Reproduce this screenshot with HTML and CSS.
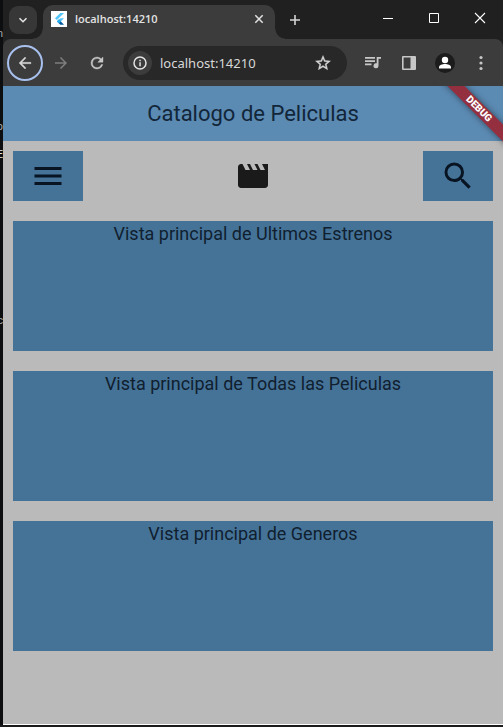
FILE: index.html
```html
<!DOCTYPE html>
<html lang="es">
<head>
<meta charset="utf-8">
<meta name="viewport" content="width=device-width, initial-scale=1">
<title>Catalogo de Peliculas</title>
<link rel="stylesheet" href="styles.css">
</head>
<body>
<div class="desktop">
  <div class="behind" aria-hidden="true">
    <span class="frag frag-n">n</span>
    <span class="frag frag-p">p</span>
    <span class="frag frag-e">E</span>
    <span class="frag frag-c">c</span>
  </div>
  <div class="window">
    <header class="tabstrip">
      <button class="tab-search" aria-label="Buscar pestañas">
        <svg width="10" height="10" viewBox="0 0 10 10"><path d="M1.500 3.200 5 6.700 8.500 3.200" fill="none" stroke="#e3e3e3" stroke-width="1.600"/></svg>
      </button>
      <div class="tab">
        <svg class="favicon" width="16" height="16" viewBox="0 0 16 16">
          <rect width="16" height="16" fill="#fff"/>
          <path d="M9.300 2h3.700L5.900 9.100 4 7.300z" fill="#54c5f8"/>
          <path d="M9.300 7.200H13L10.100 10.200 7.300 10.900 6 10.400z" fill="#54c5f8"/>
          <path d="M6 10.400 7.900 8.600 13 13.800H9.300z" fill="#01579b"/>
          <path d="M6 10.400 7.900 8.600 9.800 10.400 7.900 12.300z" fill="#29b6f6"/>
        </svg>
        <span class="tab-title">localhost:14210</span>
        <button class="tab-close" aria-label="Cerrar pestaña">
          <svg width="10" height="10" viewBox="0 0 10 10"><path d="M1.300 1.300 8.700 8.700M8.700 1.300 1.300 8.700" stroke="#e3e3e3" stroke-width="1.500"/></svg>
        </button>
      </div>
      <button class="new-tab" aria-label="Nueva pestaña">
        <svg width="12" height="12" viewBox="0 0 12 12"><path d="M6 1v10M1 6h10" stroke="#d4d4d4" stroke-width="1.600"/></svg>
      </button>
      <div class="win-controls">
        <button aria-label="Minimizar"><svg width="12" height="12" viewBox="0 0 12 12"><path d="M1 6.500h10" stroke="#fff"/></svg></button>
        <button aria-label="Maximizar"><svg width="12" height="12" viewBox="0 0 12 12"><path d="M1.500 1.500h9v9h-9z" fill="none" stroke="#fff"/></svg></button>
        <button aria-label="Cerrar"><svg width="12" height="12" viewBox="0 0 12 12"><path d="M1 1 11 11M11 1 1 11" stroke="#fff" stroke-width="1.100"/></svg></button>
      </div>
    </header>

    <nav class="toolbar">
      <button class="nav-btn back" aria-label="Atrás">
        <svg width="18" height="18" viewBox="0 0 24 24"><path d="M20 11H7.830l5.590-5.590L12 4l-8 8 8 8 1.410-1.410L7.830 13H20z" fill="#d6d6d6" stroke="#d6d6d6" stroke-width=".4"/></svg>
      </button>
      <button class="nav-btn" aria-label="Adelante">
        <svg width="18" height="18" viewBox="0 0 24 24"><path d="m12 4-1.410 1.410L16.170 11H4v2h12.170l-5.580 5.590L12 20l8-8z" fill="#7e7e7e"/></svg>
      </button>
      <button class="nav-btn" aria-label="Recargar">
        <svg width="18" height="18" viewBox="0 0 24 24"><path d="M17.650 6.350A7.960 7.960 0 0 0 12 4a8 8 0 1 0 7.730 10h-2.080A6 6 0 1 1 12 6c1.660 0 3.140.690 4.220 1.780L13 11h7V4z" fill="#c7c7c7" stroke="#c7c7c7" stroke-width=".5"/></svg>
      </button>
      <div class="omnibox">
        <button class="site-info" aria-label="Información del sitio">
          <svg width="16" height="16" viewBox="0 0 16 16"><circle cx="8" cy="8" r="6" fill="none" stroke="#e3e3e3" stroke-width="1.500"/><path d="M7.300 7.200h1.500v4H7.300zM7.300 4.700h1.500v1.500H7.300z" fill="#e3e3e3"/></svg>
        </button>
        <input class="url" type="text" value="localhost:14210" aria-label="Dirección">
        <button class="bookmark" aria-label="Añadir a marcadores">
          <svg width="18" height="18" viewBox="0 0 24 24"><path d="m22 9.240-7.190-.620L12 2 9.190 8.630 2 9.240l5.460 4.730L5.820 21 12 17.270 18.180 21l-1.630-7.030zM12 15.400l-3.760 2.270 1-4.280-3.320-2.880 4.380-.380L12 6.100l1.710 4.040 4.380.380-3.320 2.880 1 4.280z" fill="#d6d6d6" stroke="#d6d6d6" stroke-width=".5"/></svg>
        </button>
      </div>
      <div class="actions">
        <button aria-label="Controles multimedia">
          <svg width="18" height="18" viewBox="0 0 18 18"><path d="M1 3h10v1.700H1zM1 6.300h10V8H1zM1 9.600h6.500v1.700H1z" fill="#c7c7c7"/><path d="M12.700 3H17v1.800h-2.500v6.900a2.500 2.500 0 1 1-1.800-2.400z" fill="#c7c7c7"/></svg>
        </button>
        <button aria-label="Panel lateral">
          <svg width="16" height="16" viewBox="0 0 16 16"><path d="M2 1h12a1 1 0 0 1 1 1v12a1 1 0 0 1-1 1H2a1 1 0 0 1-1-1V2a1 1 0 0 1 1-1zm.600 1.600v10.800H9.500V2.600z" fill="#c7c7c7" fill-rule="evenodd"/></svg>
        </button>
        <button aria-label="Perfil">
          <svg width="20" height="20" viewBox="0 0 20 20"><circle cx="10" cy="10" r="10" fill="#1c1c1c"/><circle cx="10" cy="7" r="3.200" fill="#fff"/><path d="M4 15.500v-1.300c0-2.200 3.500-3.200 6-3.200s6 1 6 3.200v1.300z" fill="#fff"/></svg>
        </button>
        <button aria-label="Menú del navegador">
          <svg width="16" height="16" viewBox="0 0 16 16"><g fill="#c7c7c7"><circle cx="8" cy="2.500" r="1.600"/><circle cx="8" cy="8" r="1.600"/><circle cx="8" cy="13.500" r="1.600"/></g></svg>
        </button>
      </div>
    </nav>

    <div class="app">
      <div class="debug-corner"><span class="debug-band">DEBUG</span></div>
      <header class="appbar"><h1>Catalogo de Peliculas</h1></header>
      <main class="content">
        <div class="quick">
          <button class="tile" aria-label="Menú">
            <svg width="36" height="36" viewBox="0 0 24 24"><path d="M3 18h18v-2H3zm0-5h18v-2H3zm0-7v2h18V6z" fill="#081422"/></svg>
          </button>
          <svg width="36" height="36" viewBox="0 0 24 24"><path d="m18 4 2 4h-3l-2-4h-2l2 4h-3l-2-4H8l2 4H7L5 4H4c-1.100 0-1.990.900-1.990 2L2 18c0 1.100.900 2 2 2h16c1.100 0 2-.900 2-2V4z" fill="#1a1a1a"/></svg>
          <button class="tile" aria-label="Buscar">
            <svg width="36" height="36" viewBox="0 0 24 24"><path d="M15.500 14h-.790l-.280-.270A6.470 6.470 0 0 0 16 9.500 6.500 6.500 0 1 0 9.500 16c1.610 0 3.090-.590 4.230-1.570l.270.280v.790l5 4.990L20.490 19zm-6 0C7.010 14 5 11.990 5 9.500S7.010 5 9.500 5 14 7.010 14 9.500 11.990 14 9.500 14z" fill="#081422"/></svg>
          </button>
        </div>
        <section class="panel"><h2>Vista principal de Ultimos Estrenos</h2></section>
        <section class="panel"><h2>Vista principal de Todas las Peliculas</h2></section>
        <section class="panel"><h2>Vista principal de Generos</h2></section>
      </main>
    </div>
  </div>
</div>
</body>
</html>
```
FILE: styles.css
```css
* { box-sizing: border-box; }

body {
  margin: 0;
  background: #1b1b1b;
  font-family: Roboto, "Liberation Sans", sans-serif;
}

button {
  display: flex;
  align-items: center;
  justify-content: center;
  padding: 0;
  border: 0;
  background: none;
  flex: none;
}

svg { display: block; flex: none; }

.desktop {
  display: flex;
  min-height: 100vh;
  padding-bottom: 2px;
}

/* Sliver of the editor window that shows behind the browser */
.behind {
  position: relative;
  flex: none;
  width: 3px;
  overflow: hidden;
  background: #0d0e10;
}

.frag {
  position: absolute;
  right: 0;
  font-size: 11px;
  line-height: 12px;
  color: #a8a8a8;
}
.frag-n { top: 28px; }
.frag-p { top: 121px; }
.frag-e { top: 149px; color: #e8e8e8; }
.frag-c { top: 315px; }

.window {
  flex: 1;
  min-width: 0;
  display: flex;
  flex-direction: column;
  background: #202020;
}

.tabstrip {
  display: flex;
  align-items: center;
  height: 39px;
  padding-left: 6px;
}

.tab-search {
  width: 28px;
  height: 28px;
  border-radius: 9px;
  background: #373737;
}

.tab {
  position: relative;
  display: flex;
  align-items: center;
  align-self: flex-end;
  width: 232px;
  height: 34px;
  margin-left: 6px;
  padding: 0 8px 6px;
  border-radius: 10px 10px 0 0;
  background: #3c3c3c;
}

/* Concave feet of the active tab */
.tab::before,
.tab::after {
  content: "";
  position: absolute;
  bottom: 0;
  width: 10px;
  height: 10px;
}
.tab::before {
  right: 100%;
  background: radial-gradient(circle at 0 0, transparent 9px, #3c3c3c 10px);
}
.tab::after {
  left: 100%;
  background: radial-gradient(circle at 100% 0, transparent 9px, #3c3c3c 10px);
}

.tab-title {
  flex: 1;
  margin-left: 8px;
  font: 600 11px/16px "Open Sans", "Noto Sans", sans-serif;
  color: #e3e3e3;
}

.tab-close { width: 16px; height: 16px; }

.new-tab {
  width: 28px;
  height: 28px;
  margin-left: 6px;
}

.win-controls {
  display: flex;
  align-self: flex-start;
  margin-left: auto;
}
.win-controls button { width: 46px; height: 36px; }

.toolbar {
  display: flex;
  align-items: center;
  height: 47px;
  padding: 0 4px;
  border-radius: 8px 8px 0 0;
  background: #3c3c3c;
}

.nav-btn {
  width: 36px;
  height: 36px;
  border-radius: 50%;
}
.back { border: 2px solid #a8c0ee; }

.omnibox {
  display: flex;
  align-items: center;
  flex: 1;
  min-width: 0;
  height: 34px;
  margin-left: 8px;
  padding: 0 15px 0 5px;
  border-radius: 17px;
  background: #282828;
}

.site-info {
  width: 24px;
  height: 24px;
  border-radius: 50%;
  background: #3c3c3c;
}

.url {
  flex: 1;
  min-width: 0;
  margin-left: 8px;
  padding: 0;
  border: 0;
  background: none;
  font: 13px/20px "Noto Sans", "Open Sans", sans-serif;
  color: #d8d8d8;
}

.actions { display: flex; margin-left: 8px; }
.actions button { width: 36px; height: 36px; }

.app {
  position: relative;
  flex: 1;
  border-bottom: 1px solid #fff;
  background: #bababa;
}

.appbar {
  display: flex;
  align-items: center;
  justify-content: center;
  height: 55px;
  background: #5b8ab2;
}

.appbar h1 {
  margin: 0;
  font-size: 22px;
  line-height: 28px;
  font-weight: 400;
  color: #12263a;
}

.debug-corner {
  position: absolute;
  top: 0;
  right: 0;
  width: 64px;
  height: 64px;
  overflow: hidden;
}

.debug-band {
  position: absolute;
  top: 17px;
  right: -26px;
  width: 100px;
  transform: rotate(45deg);
  background: #942f40;
  box-shadow: 0 0 6px rgba(0, 0, 0, 0.5);
  font-size: 10px;
  line-height: 12px;
  font-weight: 900;
  text-align: center;
  color: #fff;
}

.content {
  display: flex;
  flex-direction: column;
  gap: 20px;
  padding: 10px;
}

.quick {
  display: flex;
  align-items: center;
  justify-content: space-between;
}

.tile {
  width: 70px;
  height: 50px;
  background: #457398;
}

.panel {
  height: 130px;
  background: #457398;
}

.panel h2 {
  margin: 0;
  font-size: 18px;
  line-height: 26px;
  font-weight: 400;
  text-align: center;
  color: #10202f;
}
```
